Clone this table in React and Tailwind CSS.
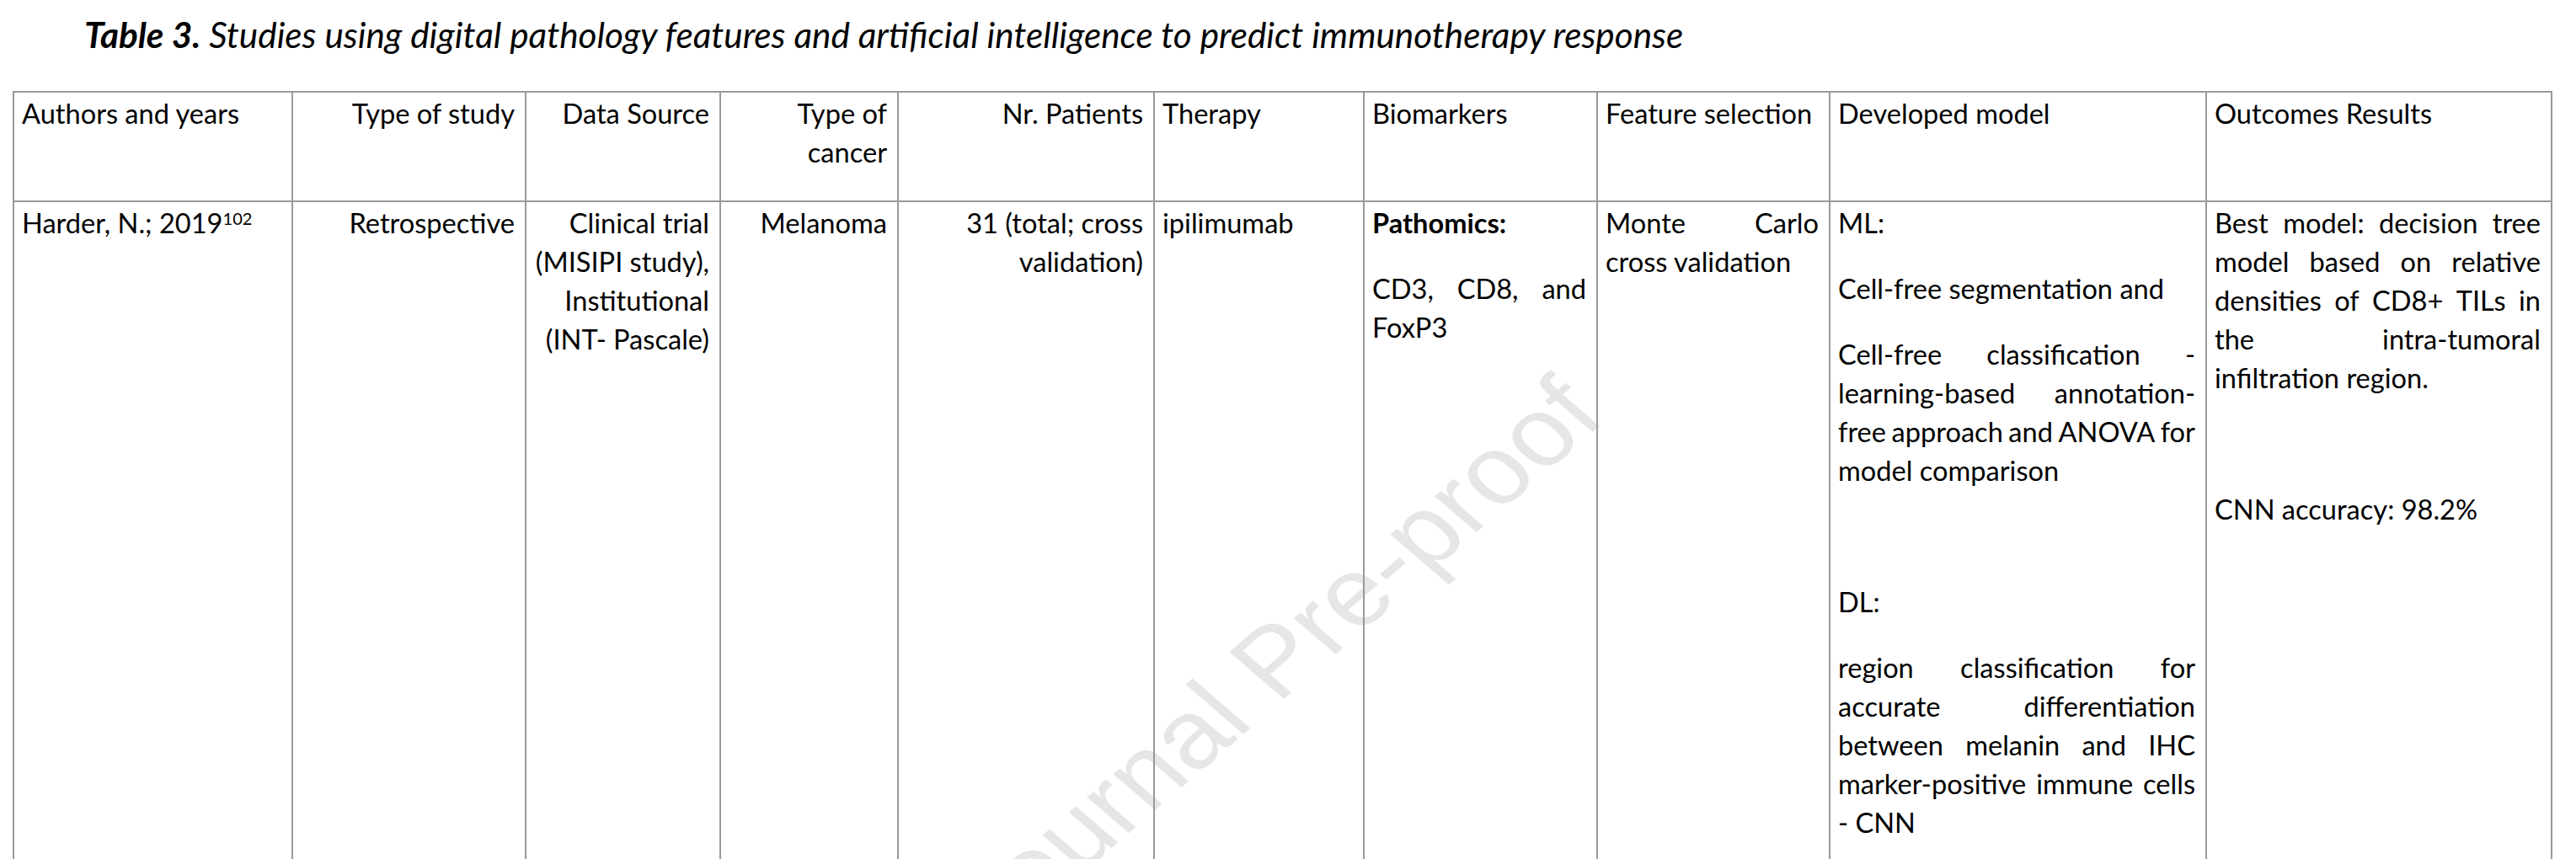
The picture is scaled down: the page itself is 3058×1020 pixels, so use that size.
import React from 'react'
import clsx from 'clsx'

const columns = [
    {
        head: ['Authors and years'],
        align: 'left',
        body: [{ lines: [<>Harder, N.; 2019<sup className="text-[20px]">102</sup></>] }],
    },
    { head: ['Type of study'], align: 'right', body: [{ lines: ['Retrospective'] }] },
    {
        head: ['Data Source'],
        align: 'right',
        body: [{ lines: ['Clinical trial', '(MISIPI study),', 'Institutional', '(INT- Pascale)'] }],
    },
    { head: ['Type of', 'cancer'], align: 'right', body: [{ lines: ['Melanoma'] }] },
    { head: ['Nr. Patients'], align: 'right', body: [{ lines: ['31 (total; cross', 'validation)'] }] },
    { head: ['Therapy'], align: 'left', body: [{ lines: ['ipilimumab'] }] },
    {
        head: ['Biomarkers'],
        align: 'left',
        body: [
            { lines: ['Pathomics:'], bold: true },
            { lines: ['CD3, CD8, and', 'FoxP3'], justify: true },
        ],
    },
    {
        head: ['Feature selection'],
        align: 'left',
        body: [{ lines: ['Monte Carlo', 'cross validation'], justify: true }],
    },
    {
        head: ['Developed model'],
        align: 'left',
        body: [
            { lines: ['ML:'] },
            { lines: ['Cell-free segmentation and'] },
            {
                lines: ['Cell-free classification -', 'learning-based annotation-', 'free approach and ANOVA for', 'model comparison'],
                justify: true,
            },
            { lines: [''] },
            { lines: ['DL:'] },
            {
                lines: [
                    'region classification for',
                    'accurate differentiation',
                    'between melanin and IHC',
                    'marker-positive immune cells',
                    '- CNN',
                ],
                justify: true,
            },
        ],
    },
    {
        head: ['Outcomes Results'],
        align: 'left',
        body: [
            {
                lines: [
                    'Best model: decision tree',
                    'model based on relative',
                    'densities of CD8+ TILs in',
                    'the intra-tumoral',
                    'infiltration region.',
                ],
                justify: true,
            },
            { lines: [''] },
            { lines: ['CNN accuracy: 98.2%'] },
        ],
    },
]

function Line({ text, align }) {
    return (
        <div className={clsx('h-[46px] whitespace-nowrap', align === 'right' ? 'text-right' : 'text-left')}>
            {text}
        </div>
    )
}

function Paragraph({ para, align }) {
    return (
        <div className={clsx('mb-[32px]', para.bold && 'font-bold')}>
            {para.lines.map((line, i) => {
                const last = i === para.lines.length - 1
                if (para.justify && !last) {
                    // spread the words over the full cell width, like Word's justified lines
                    return (
                        <div key={i} className="flex h-[46px] justify-between whitespace-nowrap">
                            {line.split(' ').map((word, j) => (
                                <span key={j}>{word}</span>
                            ))}
                        </div>
                    )
                }
                return <Line key={i} text={line} align={align} />
            })}
        </div>
    )
}

export default function App() {
    return (
        <div className="relative h-[1020px] w-[3058px] overflow-hidden bg-white text-black">
            <span className="absolute left-[1182px] top-[1029px] origin-[0_97px] [transform:scaleX(1.156)_rotate(-45deg)] whitespace-nowrap text-[115px] leading-none text-[#e6e6e6] [font-family:'Liberation_Sans',Arial,sans-serif]">
                Journal Pre-proof
            </span>

            <div className="relative [font-family:Lato,sans-serif]">
                <h2 className="pl-[100px] pt-[11px] text-[42.3px] leading-[60px] italic whitespace-nowrap">
                    <span className="font-bold">Table 3.</span> Studies using digital pathology features and artificial
                    intelligence to predict immunotherapy response
                </h2>

                <div className="ml-[15px] mt-[37px] grid w-max grid-cols-[331px_277px_231px_211px_304px_249px_277px_276px_447px_410px] grid-rows-[130px_900px] border-l-2 border-t-2 border-[#999] text-[32.6px] leading-[46px]">
                    {columns.map((col, i) => (
                        <div key={'h' + i} className="border-b-2 border-r-2 border-[#999] pl-[9px] pr-[12px] pt-[2px]">
                            {col.head.map((line, j) => (
                                <Line key={j} text={line} align={col.align} />
                            ))}
                        </div>
                    ))}
                    {columns.map((col, i) => (
                        <div key={'b' + i} className="border-b-2 border-r-2 border-[#999] pl-[9px] pr-[12px] pt-[2px]">
                            {col.body.map((para, j) => (
                                <Paragraph key={j} para={para} align={col.align} />
                            ))}
                        </div>
                    ))}
                </div>
            </div>
        </div>
    )
}
